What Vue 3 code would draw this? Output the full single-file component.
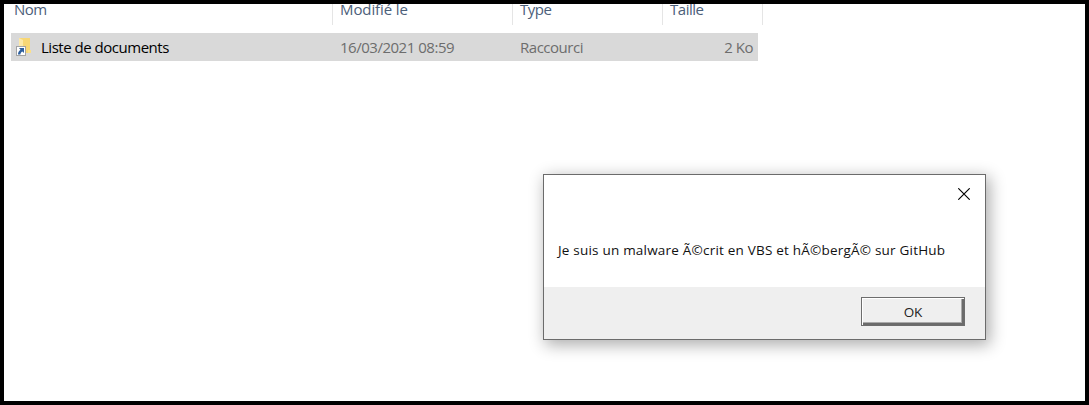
<script setup>
const columns = [
  { key: 'name', label: 'Nom' },
  { key: 'modified', label: 'Modifié le' },
  { key: 'type', label: 'Type' },
  { key: 'size', label: 'Taille' },
]
const file = {
  name: 'Liste de documents',
  modified: '16/03/2021 08:59',
  type: 'Raccourci',
  size: '2 Ko',
}
const message = 'Je suis un malware Ã©crit en VBS et hÃ©bergÃ© sur GitHub'
</script>

<template>
  <main class="window">
    <header class="columns">
      <div v-for="c in columns" :key="c.key" class="column"><span :class="c.key">{{ c.label }}</span></div>
    </header>

    <div class="row">
      <div class="cell file">
        <svg class="icon" width="16" height="20" viewBox="0 0 16 20">
          <path d="M3 1H14V16H3Z" fill="#f8d775" />
          <path d="M3 1L7 3V17H3Z" fill="#fde9a9" />
          <path d="M12 13H15V16H12Z" fill="#fbe08c" />
          <rect x="0.5" y="9.5" width="9" height="9" fill="#fff" stroke="#a3a3a3" />
          <path d="M3 11H8V16L6.4 14.6C5 15.4 4.6 16.2 4.4 17.5H2C2 15.3 2.9 13.9 4.5 12.7Z" fill="#2d5f9e" />
        </svg>
        <span>{{ file.name }}</span>
      </div>
      <div class="cell"><span>{{ file.modified }}</span></div>
      <div class="cell"><span>{{ file.type }}</span></div>
      <div class="cell end"><span>{{ file.size }}</span></div>
    </div>

    <section class="dialog" role="dialog">
      <div class="titlebar">
        <svg class="close" width="12" height="12" viewBox="0 0 12 12">
          <path d="M0.3 0.3L11.7 11.7M11.7 0.3L0.3 11.7" stroke="#000" stroke-width="1.15" />
        </svg>
      </div>
      <p class="message"><span>{{ message }}</span></p>
      <footer class="actions"><button class="ok"><span>OK</span></button></footer>
    </section>
  </main>
</template>

<style>
body {
  margin: 0;
}
</style>

<style scoped>
.window {
  position: relative;
  box-sizing: border-box;
  width: 1089px;
  height: 405px;
  border: 4px solid #000;
  background: #fff;
  overflow: hidden;
  font-family: "Open Sans", "Noto Sans", sans-serif;
  font-size: 15px;
  letter-spacing: -0.48px;
  line-height: 20px;
  white-space: nowrap;
}
.columns {
  display: grid;
  grid-template-columns: 329px 180px 150px 100px;
  height: 21px;
  color: #4c607a;
}
.column {
  box-sizing: border-box;
  border-right: 1px solid #e5e5e5;
  padding-left: 7px;
  line-height: 10px;
}
.column:first-child {
  padding-left: 10px;
}
.modified {
  letter-spacing: -0.1px;
}
.row {
  display: grid;
  grid-template-columns: 322px 180px 150px 95px;
  align-items: center;
  width: 747px;
  height: 28px;
  margin: 8px 0 0 7px;
  background: #d9d9d9;
  color: #6d6d6d;
}
.cell {
  padding-left: 7px;
}
.file {
  display: flex;
  align-items: center;
  gap: 9px;
  padding-left: 5px;
  color: #000;
}
.end {
  padding-right: 5px;
  text-align: right;
}
.dialog {
  position: absolute;
  left: 539px;
  top: 170px;
  box-sizing: border-box;
  width: 443px;
  height: 166px;
  display: flex;
  flex-direction: column;
  border: 1px solid #6b6b6b;
  background: #fff;
  box-shadow: 3px 4px 15px 1px rgba(0, 0, 0, 0.32);
}
.titlebar {
  display: flex;
  justify-content: flex-end;
  height: 31px;
  padding: 13px 15px 0 0;
  box-sizing: border-box;
}
.message {
  flex: 1;
  margin: 0;
  padding: 34px 0 0 14px;
  font-size: 13.5px;
  font-weight: 500;
  letter-spacing: 0.21px;
  color: #111;
}
.actions {
  display: flex;
  justify-content: flex-end;
  box-sizing: border-box;
  height: 52px;
  padding: 10px 20px 0 0;
  background: #efefef;
}
.ok {
  box-sizing: border-box;
  width: 104px;
  height: 29px;
  padding: 0;
  border: 1px solid #6d6d6d;
  border-radius: 0;
  background: #efefef;
  box-shadow: inset 1px 1px #fff, inset -2px -2px #6b6b6b, inset -3px -3px #aaa;
  font: 500 13.5px "Open Sans", sans-serif;
  letter-spacing: -0.1px;
  color: #222;
}
</style>
